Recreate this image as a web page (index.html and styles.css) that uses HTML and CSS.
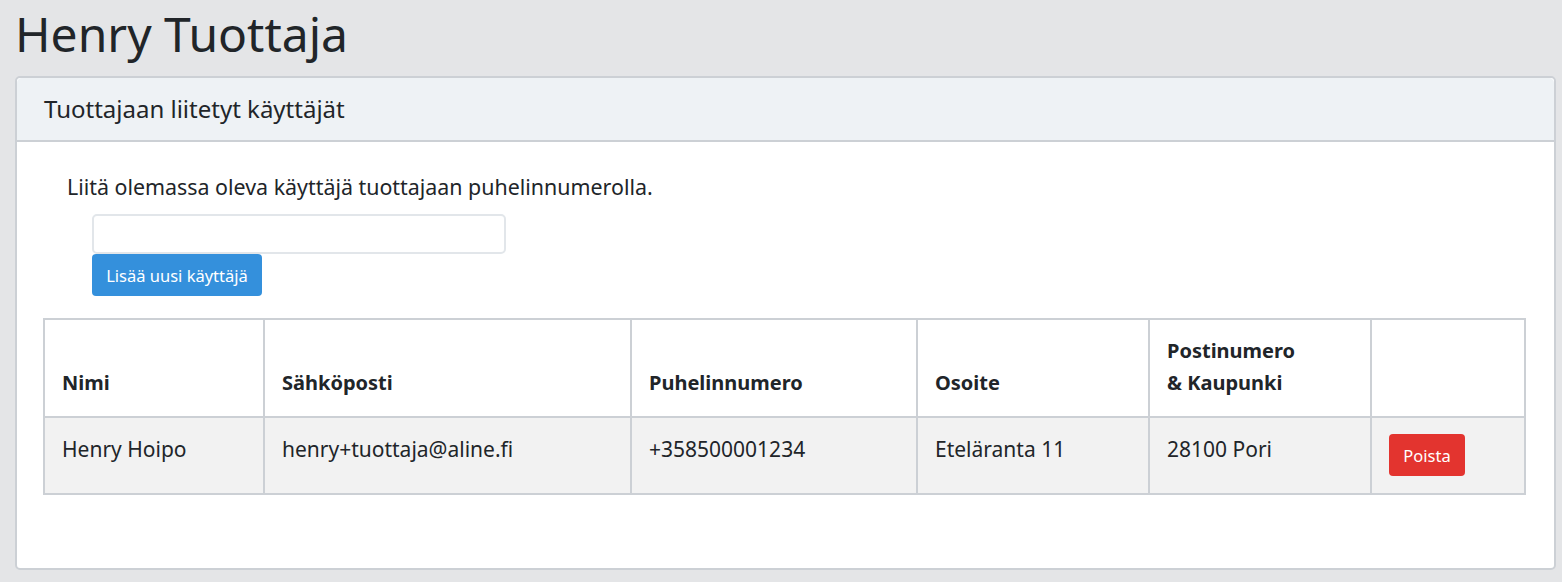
FILE: index.html
```html
<!DOCTYPE html>
<html lang="fi">

<head>
    <meta charset="UTF-8">
    <meta name="viewport" content="width=device-width, initial-scale=1.0">
    <title>Henry Tuottaja</title>
    <link rel="stylesheet" href="styles.css">
</head>

<body>
    <div class="page">
        <h1>Henry Tuottaja</h1>
        <div class="card">
            <div class="card-header">Tuottajaan liitetyt käyttäjät</div>
            <div class="card-body">
                <p class="hint">Liitä olemassa oleva käyttäjä tuottajaan puhelinnumerolla.</p>
                <form class="add-form">
                    <input type="text" class="phone-input">
                    <button type="button" class="btn btn-primary">Lisää uusi käyttäjä</button>
                </form>
                <table class="users">
                    <colgroup>
                        <col class="c-name">
                        <col class="c-email">
                        <col class="c-phone">
                        <col class="c-address">
                        <col class="c-city">
                        <col class="c-action">
                    </colgroup>
                    <thead>
                        <tr>
                            <th>Nimi</th>
                            <th>Sähköposti</th>
                            <th>Puhelinnumero</th>
                            <th>Osoite</th>
                            <th>Postinumero<br>&amp; Kaupunki</th>
                            <th></th>
                        </tr>
                    </thead>
                    <tbody>
                        <tr>
                            <td>Henry Hoipo</td>
                            <td>henry+tuottaja@aline.fi</td>
                            <td>+358500001234</td>
                            <td>Eteläranta 11</td>
                            <td>28100 Pori</td>
                            <td><button type="button" class="btn btn-danger">Poista</button></td>
                        </tr>
                    </tbody>
                </table>
            </div>
        </div>
    </div>
</body>

</html>
```

FILE: styles.css
```css
body {
    margin: 0;
    font-family: "Noto Sans", "Open Sans", sans-serif;
    background-color: #e4e5e7;
    color: #212529;
}

.page {
    padding: 0 6px 0 15px;
}

h1 {
    margin: 0;
    height: 76px;
    font-size: 48px;
    font-weight: 400;
    line-height: 68px;
}

.card {
    background-color: white;
    border: 2px solid #ccd0d5;
    border-radius: 5px;
    height: 494px;
    box-sizing: border-box;
}

.card-header {
    background-color: #eef2f5;
    border-bottom: 2px solid #ccd0d5;
    height: 64px;
    box-sizing: border-box;
    padding-left: 27px;
    font-size: 24px;
    line-height: 62px;
    border-radius: 5px 5px 0 0;
}

.card-body {
    padding: 0 28px 0 26px;
}

.hint {
    margin: 0;
    padding: 29px 0 0 24px;
    font-size: 21.4px;
    line-height: 32px;
}

.add-form {
    display: flex;
    flex-direction: column;
    align-items: flex-start;
    padding: 11px 0 0 49px;
}

.phone-input {
    width: 414px;
    height: 40px;
    box-sizing: border-box;
    border: 2px solid #e2e6ea;
    border-radius: 5px;
    margin: 0;
}

.btn {
    border: none;
    border-radius: 4px;
    color: white;
    font-family: inherit;
    font-size: 16.5px;
    cursor: pointer;
}

.btn-primary {
    background-color: #3490dc;
    height: 42px;
    width: 170px;
}

.btn-danger {
    background-color: #e3342f;
    height: 42px;
    width: 76px;
}

.users {
    margin-top: 22px;
    width: 1481px;
    border-collapse: collapse;
    table-layout: fixed;
}

.c-name { width: 220px; }
.c-email { width: 367px; }
.c-phone { width: 286px; }
.c-address { width: 232px; }
.c-city { width: 222px; }
.c-action { width: 154px; }

.users th,
.users td {
    border: 2px solid #ccd0d5;
    padding: 15px 17px 17px;
    text-align: left;
    line-height: 32px;
}

.users th {
    vertical-align: bottom;
    font-size: 20px;
    font-weight: 700;
    height: 64px;
}

.users td {
    vertical-align: top;
    font-size: 21px;
    background-color: #f2f2f2;
}

.users td:last-child {
    padding-top: 16px;
}
```
